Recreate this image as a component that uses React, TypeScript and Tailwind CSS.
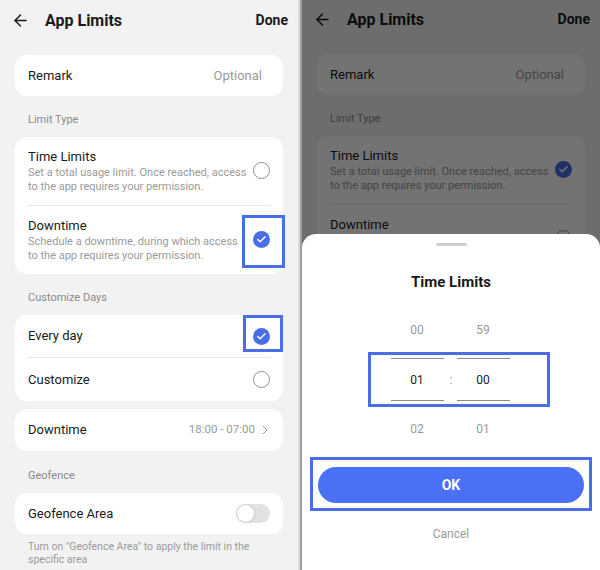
import React from "react";
import { ArrowLeft, Check, ChevronRight } from "lucide-react";

const FONT = { fontFamily: "Roboto, 'Noto Sans', sans-serif" };

function Radio({ checked }: { checked: boolean }) {
  if (checked) {
    return (
      <span className="flex h-[17px] w-[17px] shrink-0 items-center justify-center rounded-full bg-[#4a6ee6]">
        <Check size={11} strokeWidth={3} className="text-white" />
      </span>
    );
  }
  return <span className="block h-[17px] w-[17px] shrink-0 rounded-full border border-[#8f8f8f]" />;
}

function Label({ children, top = "pt-[17px]" }: { children: React.ReactNode; top?: string }) {
  return (
    <div className={`px-[28px] ${top} pb-[10px] text-[11px] leading-[14px] text-[#8a8a8a]`}>
      {children}
    </div>
  );
}

function Screen({ timeChecked, marks }: { timeChecked: boolean; marks: boolean }) {
  return (
    <div className="flex h-full flex-col bg-[#f2f2f2]">
      {/* header */}
      <div className="flex h-[40px] items-center pl-[11px] pr-[10px] pt-[1px]">
        <ArrowLeft size={19} strokeWidth={1.8} className="text-[#1a1a1a]" />
        <span className="ml-[15px] text-[16px] font-bold text-[#1a1a1a]">App Limits</span>
        <span className="ml-auto text-[14px] font-bold text-[#1a1a1a]">Done</span>
      </div>

      <div className="mt-[15px] px-[15px]">
        <div className="flex h-[41px] items-center justify-between rounded-[12px] bg-white px-[13px] text-[13px]">
          <span className="text-[#1a1a1a]">Remark</span>
          <span className="mr-[8px] text-[#9a9a9a]">Optional</span>
        </div>
      </div>

      <Label>Limit Type</Label>
      <div className="px-[15px]">
        <div className="relative rounded-[12px] bg-white px-[13px]">
          <div className="flex items-center pt-[11px] pb-[12px]">
            <div className="w-[220px]">
              <div className="text-[13px] leading-[18px] text-[#1a1a1a]">Time Limits</div>
              <div className="text-[11px] leading-[13.5px] text-[#9a9a9a]">
                Set a total usage limit. Once reached, access to the app requires your permission.
              </div>
            </div>
            <div className="ml-auto shrink-0">
              <Radio checked={timeChecked} />
            </div>
          </div>
          <div className="h-px bg-[#e8e8e8]" />
          <div className="relative flex items-center pt-[11px] pb-[12px]">
            <div className="w-[220px]">
              <div className="text-[13px] leading-[18px] text-[#1a1a1a]">Downtime</div>
              <div className="text-[11px] leading-[13.5px] text-[#9a9a9a]">
                Schedule a downtime, during which access to the app requires your permission.
              </div>
            </div>
            <div className="ml-auto shrink-0">
              <Radio checked={!timeChecked} />
            </div>
            {marks && (
              <div className="absolute left-[214px] top-[9px] h-[53px] w-[43px] border-[3px] border-[#4a6ee8]" />
            )}
          </div>
        </div>
      </div>

      <Label>Customize Days</Label>
      <div className="px-[15px]">
        <div className="relative rounded-[12px] bg-white px-[13px] text-[13px] text-[#1a1a1a]">
          <div className="flex h-[42px] items-center justify-between">
            <span>Every day</span>
            <Radio checked />
          </div>
          <div className="h-px bg-[#e8e8e8]" />
          <div className="flex h-[43px] items-center justify-between">
            <span>Customize</span>
            <Radio checked={false} />
          </div>
          {marks && (
            <div className="absolute left-[228px] top-0 h-[37px] w-[40px] border-[3px] border-[#4a6ee8]" />
          )}
        </div>
      </div>

      <div className="mt-[8px] px-[15px]">
        <div className="flex h-[42px] items-center justify-between rounded-[12px] bg-white pl-[13px] pr-[10px] text-[13px]">
          <span className="text-[#1a1a1a]">Downtime</span>
          <span className="flex items-center gap-[2px] text-[11.5px] text-[#9a9a9a]">
            18:00 - 07:00
            <ChevronRight size={16} strokeWidth={1.5} />
          </span>
        </div>
      </div>

      <Label top="pt-[18px]">Geofence</Label>
      <div className="px-[15px]">
        <div className="flex h-[41px] items-center justify-between rounded-[12px] bg-white pl-[13px] pr-[13px] text-[13px]">
          <span className="text-[#1a1a1a]">Geofence Area</span>
          <span className="flex h-[19px] w-[34px] items-center rounded-full bg-[#e1e1e3] px-[1px]">
            <span className="h-[17px] w-[17px] rounded-full bg-white shadow-[0_0_2px_rgba(0,0,0,0.25)]" />
          </span>
        </div>
      </div>

      <div className="px-[28px] pt-[6px] text-[10.5px] leading-[13px] text-[#9a9a9a]">
        Turn on "Geofence Area" to apply the limit in the specific area
      </div>
    </div>
  );
}

function Sheet() {
  return (
    <div className="absolute inset-x-0 bottom-0 top-[234px] flex flex-col items-center rounded-t-[14px] bg-white">
      <div className="mt-[9px] h-[3px] w-[31px] rounded-full bg-[#d0d0d0]" />
      <div className="mt-[26px] text-[15px] font-bold leading-[20px] text-[#1a1a1a]">Time Limits</div>

      <div className="relative ml-[-2px] mt-[28px] flex flex-col items-center text-[12px]">
        <div className="flex h-[20px] items-center gap-[13px] text-[#9a9a9a]">
          <span className="w-[53px] text-center">00</span>
          <span className="w-[53px] text-center">59</span>
        </div>
        <div className="mt-[18px] flex items-center gap-[6px] text-[#1a1a1a]">
          <div className="flex h-[43px] w-[53px] items-center justify-center border-y border-[#8a8a8a]">01</div>
          <span className="w-[1px] text-[#9a9a9a]">:</span>
          <div className="flex h-[43px] w-[53px] items-center justify-center border-y border-[#8a8a8a]">00</div>
        </div>
        <div className="mt-[18px] flex h-[20px] items-center gap-[13px] text-[#9a9a9a]">
          <span className="w-[53px] text-center">02</span>
          <span className="w-[53px] text-center">01</span>
        </div>
        <div className="absolute left-[-23px] top-[32px] h-[55px] w-[182px] border-[3px] border-[#4a6ee8]" />
      </div>

      <div className="ml-[8px] mt-[18px] w-[282px] self-start border-[3px] border-[#4a6ee8] px-[5px] pt-[7px] pb-[5px]">
        <div className="flex h-[36px] items-center justify-center rounded-full bg-[#4a70f5] text-[14px] font-bold text-white">
          OK
        </div>
      </div>

      <div className="mt-[14px] text-[12px] text-[#9a9a9a]">Cancel</div>
    </div>
  );
}

export default function App() {
  return (
    <div className="flex h-[570px] w-[600px] overflow-hidden bg-white" style={FONT}>
      <div className="h-full w-[298px] shrink-0">
        <Screen timeChecked={false} marks />
      </div>
      <div className="h-full w-[2px] shrink-0 bg-[#dadada]" />
      <div className="h-full w-[2px] shrink-0 bg-[#9c9c9c]" />
      <div className="relative h-full w-[298px] shrink-0 overflow-hidden">
        <div className="-mt-[1px] h-full">
          <Screen timeChecked marks={false} />
        </div>
        <div className="absolute inset-0 bg-black/55" />
        <Sheet />
      </div>
    </div>
  );
}
